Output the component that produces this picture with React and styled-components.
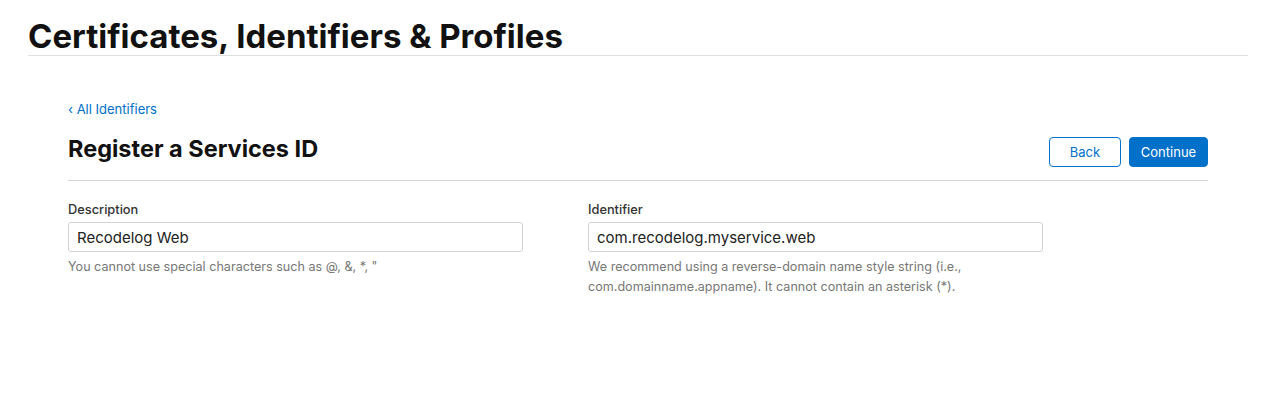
import React from 'react';
import styled, { createGlobalStyle } from 'styled-components';

const GlobalStyle = createGlobalStyle`
  body {
    margin: 0;
    background: #fff;
    font-family: Inter, "Liberation Sans", sans-serif;
    color: #111;
  }
`;

// Page frame
const Page = styled.div`
  padding: 0 28px;
`;

const PageHeader = styled.header`
  border-bottom: 1px solid #e0e0e0;
  padding-top: 16px;
  height: 39px;
`;

const PageTitle = styled.h1`
  margin: 0;
  font-size: 33px;
  line-height: 40px;
  font-weight: 700;
  letter-spacing: 0;
  color: #111;
`;

const Content = styled.main`
  padding: 42px 40px 0;
`;

const BackLink = styled.a`
  display: inline-block;
  font-size: 13px;
  line-height: 18px;
  color: #0070c9;
  text-decoration: none;
`;

// Section title row with actions
const TitleRow = styled.div`
  display: flex;
  align-items: center;
  justify-content: space-between;
  margin-top: 13px;
  padding-bottom: 13px;
  border-bottom: 1px solid #d6d6d6;
`;

const SectionTitle = styled.h2`
  margin: 0;
  font-size: 23.5px;
  line-height: 32px;
  font-weight: 700;
  color: #111;
`;

const Actions = styled.div`
  display: flex;
  gap: 8px;
  margin-top: 6px;
`;

const Button = styled.button`
  height: 30px;
  padding: 0;
  width: ${p => p.width}px;
  border-radius: 4px;
  font-family: inherit;
  font-size: 13px;
  border: 1px solid #0070c9;
  background: ${p => (p.primary ? '#0070c9' : '#fff')};
  color: ${p => (p.primary ? '#fff' : '#0070c9')};
  cursor: pointer;
`;

// Form grid
const Fields = styled.div`
  display: grid;
  grid-template-columns: 520px 455px;
  margin-top: 21px;
`;

const Field = styled.div`
  display: flex;
  flex-direction: column;
  width: 455px;
`;

const Label = styled.label`
  font-size: 12.8px;
  line-height: 16px;
  font-weight: 500;
  color: #333;
  margin-bottom: 4px;
`;

const Input = styled.input`
  box-sizing: border-box;
  height: 30px;
  width: 100%;
  border: 1px solid #d2d2d2;
  border-radius: 3px;
  padding: 0 8px;
  font-family: inherit;
  font-size: 15px;
  color: #222;
  outline: none;
`;

const Hint = styled.p`
  margin: 5px 0 0;
  font-size: 12.6px;
  line-height: 20px;
  color: #777;
`;

export default function App() {
  return (
    <>
      <GlobalStyle />
      <Page>
        <PageHeader>
          <PageTitle>Certificates, Identifiers &amp; Profiles</PageTitle>
        </PageHeader>
        <Content>
          <BackLink href="#">‹ All Identifiers</BackLink>
          <TitleRow>
            <SectionTitle>Register a Services ID</SectionTitle>
            <Actions>
              <Button width={72}>Back</Button>
              <Button primary width={79}>Continue</Button>
            </Actions>
          </TitleRow>
          <Fields>
            <Field>
              <Label>Description</Label>
              <Input defaultValue="Recodelog Web" />
              <Hint>You cannot use special characters such as @, &amp;, *, "</Hint>
            </Field>
            <Field>
              <Label>Identifier</Label>
              <Input defaultValue="com.recodelog.myservice.web" />
              <Hint>
                We recommend using a reverse-domain name style string (i.e.,
                com.domainname.appname). It cannot contain an asterisk (*).
              </Hint>
            </Field>
          </Fields>
        </Content>
      </Page>
    </>
  );
}
